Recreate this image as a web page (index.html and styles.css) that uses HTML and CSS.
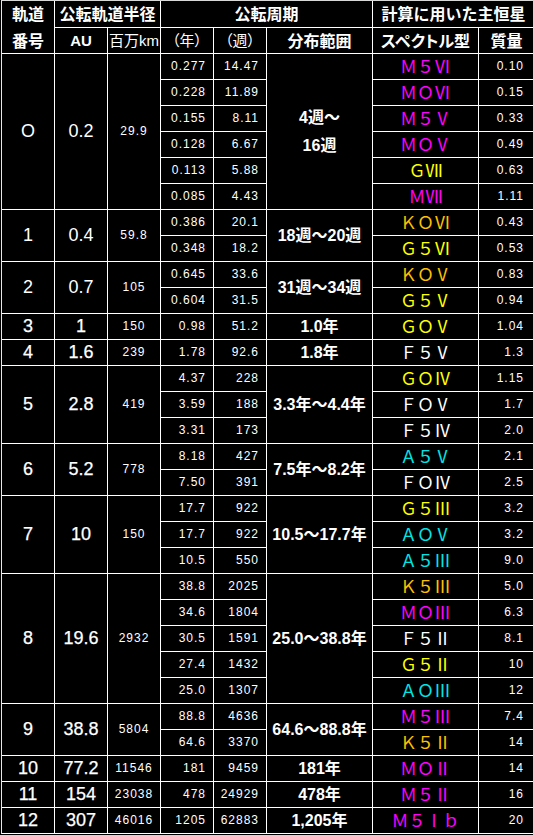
FILE: index.html
```html
<!DOCTYPE html>
<html lang="ja">
<head>
<meta charset="utf-8">
<title>軌道と公転周期</title>
<link rel="stylesheet" href="styles.css">
</head>
<body>
<div class="tbl">
  <div class="cell hd r2 two">軌道<br>番号</div>
  <div class="cell hd c2">公転軌道半径</div>
  <div class="cell hd c3">公転周期</div>
  <div class="cell hd c2">計算に用いた主恒星</div>
  <div class="cell au">AU</div>
  <div class="cell sub">百万km</div>
  <div class="cell sub">（年）</div>
  <div class="cell sub">（週）</div>
  <div class="cell hd">分布範囲</div>
  <div class="cell hd palt">スペクトル型</div>
  <div class="cell hd">質量</div>

  <!-- 0 -->
  <div class="cell no r6">O</div>
  <div class="cell no r6">0.2</div>
  <div class="cell km r6">29.9</div>
  <div class="cell num">0.277</div>
  <div class="cell num">14.47</div>
  <div class="cell dist r6">4週〜<br>16週</div>
  <div class="cell sp m">Ｍ５Ⅵ</div>
  <div class="cell mass">0.10</div>
  <div class="cell num">0.228</div>
  <div class="cell num">11.89</div>
  <div class="cell sp m">ＭＯⅥ</div>
  <div class="cell mass">0.15</div>
  <div class="cell num">0.155</div>
  <div class="cell num">8.11</div>
  <div class="cell sp m">Ｍ５Ⅴ</div>
  <div class="cell mass">0.33</div>
  <div class="cell num">0.128</div>
  <div class="cell num">6.67</div>
  <div class="cell sp m">ＭＯⅤ</div>
  <div class="cell mass">0.49</div>
  <div class="cell num">0.113</div>
  <div class="cell num">5.88</div>
  <div class="cell sp g">ＧⅦ</div>
  <div class="cell mass">0.63</div>
  <div class="cell num">0.085</div>
  <div class="cell num">4.43</div>
  <div class="cell sp m">ＭⅦ</div>
  <div class="cell mass">1.11</div>

  <!-- 1 -->
  <div class="cell no r2">1</div>
  <div class="cell no r2">0.4</div>
  <div class="cell km r2">59.8</div>
  <div class="cell num">0.386</div>
  <div class="cell num">20.1</div>
  <div class="cell dist r2">18週〜20週</div>
  <div class="cell sp k">ＫＯⅥ</div>
  <div class="cell mass">0.43</div>
  <div class="cell num">0.348</div>
  <div class="cell num">18.2</div>
  <div class="cell sp g">Ｇ５Ⅵ</div>
  <div class="cell mass">0.53</div>

  <!-- 2 -->
  <div class="cell no r2">2</div>
  <div class="cell no r2">0.7</div>
  <div class="cell km r2">105</div>
  <div class="cell num">0.645</div>
  <div class="cell num">33.6</div>
  <div class="cell dist r2">31週〜34週</div>
  <div class="cell sp k">ＫＯⅤ</div>
  <div class="cell mass">0.83</div>
  <div class="cell num">0.604</div>
  <div class="cell num">31.5</div>
  <div class="cell sp g">Ｇ５Ⅴ</div>
  <div class="cell mass">0.94</div>

  <!-- 3 -->
  <div class="cell no b">3</div>
  <div class="cell no b">1</div>
  <div class="cell km">150</div>
  <div class="cell num">0.98</div>
  <div class="cell num">51.2</div>
  <div class="cell dist">1.0年</div>
  <div class="cell sp g">ＧＯⅤ</div>
  <div class="cell mass">1.04</div>

  <!-- 4 -->
  <div class="cell no b">4</div>
  <div class="cell no b">1.6</div>
  <div class="cell km">239</div>
  <div class="cell num">1.78</div>
  <div class="cell num">92.6</div>
  <div class="cell dist">1.8年</div>
  <div class="cell sp f">Ｆ５Ⅴ</div>
  <div class="cell mass">1.3</div>

  <!-- 5 -->
  <div class="cell no b r3">5</div>
  <div class="cell no b r3">2.8</div>
  <div class="cell km r3">419</div>
  <div class="cell num">4.37</div>
  <div class="cell num">228</div>
  <div class="cell dist r3">3.3年〜4.4年</div>
  <div class="cell sp g">ＧＯⅣ</div>
  <div class="cell mass">1.15</div>
  <div class="cell num">3.59</div>
  <div class="cell num">188</div>
  <div class="cell sp f">ＦＯⅤ</div>
  <div class="cell mass">1.7</div>
  <div class="cell num">3.31</div>
  <div class="cell num">173</div>
  <div class="cell sp f">Ｆ５Ⅳ</div>
  <div class="cell mass">2.0</div>

  <!-- 6 -->
  <div class="cell no b r2">6</div>
  <div class="cell no b r2">5.2</div>
  <div class="cell km r2">778</div>
  <div class="cell num">8.18</div>
  <div class="cell num">427</div>
  <div class="cell dist r2">7.5年〜8.2年</div>
  <div class="cell sp a">Ａ５Ⅴ</div>
  <div class="cell mass">2.1</div>
  <div class="cell num">7.50</div>
  <div class="cell num">391</div>
  <div class="cell sp f">ＦＯⅣ</div>
  <div class="cell mass">2.5</div>

  <!-- 7 -->
  <div class="cell no b r3">7</div>
  <div class="cell no b r3">10</div>
  <div class="cell km r3">150</div>
  <div class="cell num">17.7</div>
  <div class="cell num">922</div>
  <div class="cell dist r3">10.5〜17.7年</div>
  <div class="cell sp g">Ｇ５Ⅲ</div>
  <div class="cell mass">3.2</div>
  <div class="cell num">17.7</div>
  <div class="cell num">922</div>
  <div class="cell sp a">ＡＯⅤ</div>
  <div class="cell mass">3.2</div>
  <div class="cell num">10.5</div>
  <div class="cell num">550</div>
  <div class="cell sp a">Ａ５Ⅲ</div>
  <div class="cell mass">9.0</div>

  <!-- 8 -->
  <div class="cell no b r5">8</div>
  <div class="cell no b r5">19.6</div>
  <div class="cell km r5">2932</div>
  <div class="cell num">38.8</div>
  <div class="cell num">2025</div>
  <div class="cell dist r5">25.0〜38.8年</div>
  <div class="cell sp k">Ｋ５Ⅲ</div>
  <div class="cell mass">5.0</div>
  <div class="cell num">34.6</div>
  <div class="cell num">1804</div>
  <div class="cell sp m">ＭＯⅢ</div>
  <div class="cell mass">6.3</div>
  <div class="cell num">30.5</div>
  <div class="cell num">1591</div>
  <div class="cell sp f">Ｆ５Ⅱ</div>
  <div class="cell mass">8.1</div>
  <div class="cell num">27.4</div>
  <div class="cell num">1432</div>
  <div class="cell sp g">Ｇ５Ⅱ</div>
  <div class="cell mass">10</div>
  <div class="cell num">25.0</div>
  <div class="cell num">1307</div>
  <div class="cell sp a">ＡＯⅢ</div>
  <div class="cell mass">12</div>

  <!-- 9 -->
  <div class="cell no b r2">9</div>
  <div class="cell no b r2">38.8</div>
  <div class="cell km r2">5804</div>
  <div class="cell num">88.8</div>
  <div class="cell num">4636</div>
  <div class="cell dist r2">64.6〜88.8年</div>
  <div class="cell sp m">Ｍ５Ⅲ</div>
  <div class="cell mass">7.4</div>
  <div class="cell num">64.6</div>
  <div class="cell num">3370</div>
  <div class="cell sp k">Ｋ５Ⅱ</div>
  <div class="cell mass">14</div>

  <!-- 10 -->
  <div class="cell no b">10</div>
  <div class="cell no b">77.2</div>
  <div class="cell km">11546</div>
  <div class="cell num">181</div>
  <div class="cell num">9459</div>
  <div class="cell dist">181年</div>
  <div class="cell sp m">ＭＯⅡ</div>
  <div class="cell mass">14</div>

  <!-- 11 -->
  <div class="cell no b">11</div>
  <div class="cell no b">154</div>
  <div class="cell km">23038</div>
  <div class="cell num">478</div>
  <div class="cell num">24929</div>
  <div class="cell dist">478年</div>
  <div class="cell sp m">Ｍ５Ⅱ</div>
  <div class="cell mass">16</div>

  <!-- 12 -->
  <div class="cell no b">12</div>
  <div class="cell no b">307</div>
  <div class="cell km">46016</div>
  <div class="cell num">1205</div>
  <div class="cell num">62883</div>
  <div class="cell dist">1,205年</div>
  <div class="cell sp m">Ｍ５Ⅰｂ</div>
  <div class="cell mass">20</div>
</div>
</body>
</html>
```

FILE: styles.css
```css
html, body {
  margin: 0;
  padding: 0;
  background: #000;
}

body {
  color: #fff;
  font-family: "Liberation Sans", "Noto Sans CJK JP", sans-serif;
}

.tbl {
  display: grid;
  grid-template-columns: 53px 53px 53px 53px 53px 106px 106px 56px;
  grid-template-rows: 27px 26px;
  grid-auto-rows: 26px;
  width: max-content;
  margin-left: 1px;
  border-top: 1px solid #d8d8d8;
  border-left: 1px solid #e8e8e8;
  background: #000;
}

.cell {
  box-sizing: border-box;
  display: flex;
  align-items: center;
  justify-content: center;
  text-align: center;
  white-space: nowrap;
  border-right: 1px solid #fff;
  border-bottom: 1px solid #fff;
  line-height: 1.2;
}

.r2 { grid-row: span 2; }
.r3 { grid-row: span 3; }
.r5 { grid-row: span 5; }
.r6 { grid-row: span 6; }
.c2 { grid-column: span 2; }
.c3 { grid-column: span 3; }

/* headers */
.hd {
  font-family: "Noto Sans CJK JP", sans-serif;
  font-weight: 700;
  font-size: 16px;
}

.two {
  line-height: 27px;
}

.palt {
  font-feature-settings: "palt";
}

.au {
  font-weight: 700;
  font-size: 15px;
}

.sub {
  font-family: "Liberation Sans", "Noto Sans CJK JP", sans-serif;
  font-size: 15px;
  font-feature-settings: "palt";
}

/* data */
.no {
  font-size: 18px;
}

.no.b {
  -webkit-text-stroke: 0.25px #fff;
}

.km {
  font-size: 12px;
  letter-spacing: 1px;
}

.num {
  font-size: 12px;
  letter-spacing: 1px;
  justify-content: flex-end;
  padding-right: 7px;
}

.mass {
  font-size: 12px;
  letter-spacing: 1px;
  justify-content: flex-end;
  padding-right: 10px;
}

.dist {
  font-family: "Liberation Sans", "Noto Sans CJK JP", sans-serif;
  font-weight: 700;
  font-size: 16px;
  line-height: 28px;
}

.sp {
  font-family: "Noto Sans CJK JP", sans-serif;
  font-size: 17px;
}

.m { color: #ff00ff; }
.k { color: #ffc000; }
.g { color: #ffff00; }
.f { color: #ffffff; }
.a { color: #00e6e6; }
```
